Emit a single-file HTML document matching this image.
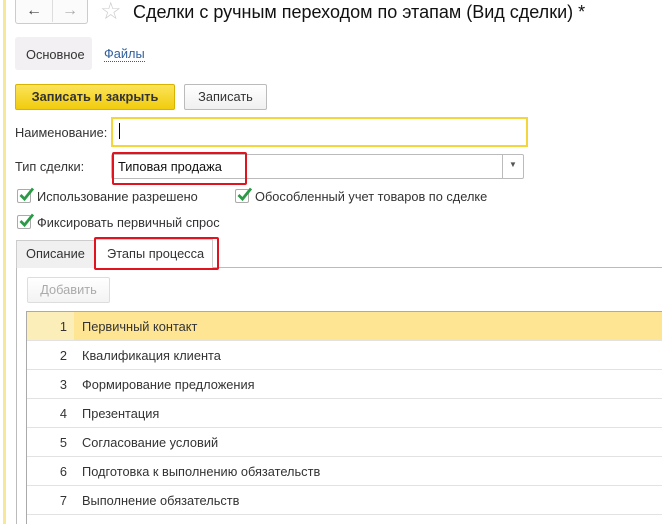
<!DOCTYPE html>
<html><head><meta charset="utf-8"><style>
*{box-sizing:border-box;margin:0;padding:0}
body{width:662px;height:524px;overflow:hidden;background:#fff;font-family:"Liberation Sans",sans-serif;font-size:12.8px;color:#333;position:relative}
.a{position:absolute}
.cb{position:absolute;width:14px;height:14px;border:1px solid #aaa;border-radius:2px;background:#fff}
.cb svg{position:absolute;left:1px;top:-3px;overflow:visible}
.row{position:absolute;left:27px;width:635px;height:29px;border-bottom:1px solid #e2e2e2}
.row .n{position:absolute;left:0;width:40px;text-align:right;top:7px}
.row .t{position:absolute;left:55px;top:7px}
</style></head><body>
<div class="a" style="left:3px;top:0;width:3px;height:524px;background:#f6e79a"></div>
<div class="a" style="left:15px;top:0;width:73px;height:24px;border:1px solid #ccc;border-top:none;border-radius:0 0 3px 3px;background:#fbfbfb"></div>
<div class="a" style="left:52px;top:0;width:1px;height:22px;background:#ddd"></div>
<div class="a" style="left:26px;top:2px;font-size:16px;color:#444">&#8592;</div>
<div class="a" style="left:62px;top:2px;font-size:16px;color:#aaa">&#8594;</div>
<div class="a" style="left:100px;top:-3px;font-size:24px;color:#ccc">&#9734;</div>
<div class="a" style="left:133px;top:2px;font-size:18px;color:#111">Сделки с ручным переходом по этапам (Вид сделки) *</div>
<div class="a" style="left:15px;top:37px;width:77px;height:33px;background:#f2f0f2;border-radius:3px"></div>
<div class="a" style="left:26px;top:47px">Основное</div>
<div class="a" style="left:104px;top:47px;color:#315f9c;border-bottom:1px dotted #315f9c;line-height:14px">Файлы</div>
<div class="a" style="left:15px;top:84px;width:160px;height:26px;background:linear-gradient(#fbe35a,#f1cc0c);border:1px solid #d8b400;border-radius:2px;font-weight:bold;color:#333;text-align:center;line-height:24px">Записать и закрыть</div>
<div class="a" style="left:184px;top:84px;width:83px;height:26px;background:linear-gradient(#fff,#f0f0f0);border:1px solid #bbb;border-radius:2px;text-align:center;line-height:24px">Записать</div>
<div class="a" style="left:15px;top:125px">Наименование:</div>
<div class="a" style="left:111px;top:117px;width:417px;height:30px;border:2px solid #f3d53c"></div>
<div class="a" style="left:119px;top:123px;width:1px;height:16px;background:#000"></div>
<div class="a" style="left:15px;top:159px">Тип сделки:</div>
<div class="a" style="left:111px;top:154px;width:413px;height:25px;border:1px solid #bbb;border-radius:2px"></div>
<div class="a" style="left:502px;top:154px;width:1px;height:25px;background:#bbb"></div>
<div class="a" style="left:509px;top:160px;font-size:8px;color:#555">&#9660;</div>
<div class="a" style="left:118px;top:159px;color:#111">Типовая продажа</div>
<div class="a" style="left:112px;top:152px;width:135px;height:33px;border:2px solid #e0131f;border-radius:2px"></div>
<div class="cb" style="left:17px;top:189px"><svg width="16" height="16"><path d="M1.5 8 L5.5 12 L14 1.5" stroke="#2a9a47" stroke-width="2.8" fill="none"/></svg></div>
<div class="a" style="left:37px;top:189px">Использование разрешено</div>
<div class="cb" style="left:235px;top:189px"><svg width="16" height="16"><path d="M1.5 8 L5.5 12 L14 1.5" stroke="#2a9a47" stroke-width="2.8" fill="none"/></svg></div>
<div class="a" style="left:255px;top:189px">Обособленный учет товаров по сделке</div>
<div class="cb" style="left:17px;top:215px"><svg width="16" height="16"><path d="M1.5 8 L5.5 12 L14 1.5" stroke="#2a9a47" stroke-width="2.8" fill="none"/></svg></div>
<div class="a" style="left:37px;top:215px">Фиксировать первичный спрос</div>
<div class="a" style="left:16px;top:267px;width:646px;height:257px;border-left:1px solid #bbb;border-top:1px solid #bbb"></div>
<div class="a" style="left:16px;top:240px;width:80px;height:28px;background:#f1f0f1;border:1px solid #ccc;border-bottom:none"></div>
<div class="a" style="left:26px;top:246px">Описание</div>
<div class="a" style="left:95px;top:239px;width:118px;height:30px;background:#fff;border:1px solid #ccc;border-bottom:none"></div>
<div class="a" style="left:107px;top:246px">Этапы процесса</div>
<div class="a" style="left:94px;top:237px;width:125px;height:33px;border:2px solid #e0131f;border-radius:2px"></div>
<div class="a" style="left:27px;top:277px;width:83px;height:26px;border:1px solid #ddd;border-radius:2px;background:linear-gradient(#fff,#f3f3f3);color:#aaa;text-align:center;line-height:24px">Добавить</div>
<div class="a" style="left:26px;top:311px;width:636px;height:213px;border-left:1px solid #aaa;border-top:1px solid #aaa"></div>
<div class="row" style="top:312px;background:#fbeeb8"><div class="a" style="left:47px;top:0;width:588px;height:28px;background:#fde594"></div><span class="n">1</span><span class="t">Первичный контакт</span></div>
<div class="row" style="top:341px"><span class="n">2</span><span class="t">Квалификация клиента</span></div>
<div class="row" style="top:370px"><span class="n">3</span><span class="t">Формирование предложения</span></div>
<div class="row" style="top:399px"><span class="n">4</span><span class="t">Презентация</span></div>
<div class="row" style="top:428px"><span class="n">5</span><span class="t">Согласование условий</span></div>
<div class="row" style="top:457px"><span class="n">6</span><span class="t">Подготовка к выполнению обязательств</span></div>
<div class="row" style="top:486px"><span class="n">7</span><span class="t">Выполнение обязательств</span></div>
</body></html>
